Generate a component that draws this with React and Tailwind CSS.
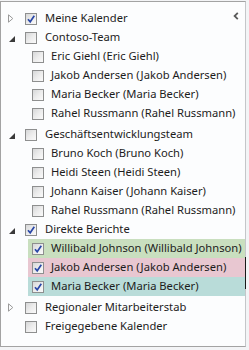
import React from 'react'

const groups = [
  { name: 'Meine Kalender', expander: 'closed', checked: true, items: [] },
  {
    name: 'Contoso-Team',
    expander: 'open',
    items: [
      { name: 'Eric Giehl (Eric Giehl)' },
      { name: 'Jakob Andersen (Jakob Andersen)' },
      { name: 'Maria Becker (Maria Becker)' },
      { name: 'Rahel Russmann (Rahel Russmann)' },
    ],
  },
  {
    name: 'Geschäftsentwicklungsteam',
    expander: 'open',
    gap: true,
    items: [
      { name: 'Bruno Koch (Bruno Koch)' },
      { name: 'Heidi Steen (Heidi Steen)' },
      { name: 'Johann Kaiser (Johann Kaiser)' },
      { name: 'Rahel Russmann (Rahel Russmann)' },
    ],
  },
  {
    name: 'Direkte Berichte',
    expander: 'open',
    checked: true,
    items: [
      { name: 'Willibald Johnson (Willibald Johnson)', checked: true, band: 'bg-[#c9dfbf]' },
      { name: 'Jakob Andersen (Jakob Andersen)', checked: true, band: 'bg-[#e8c7d1]' },
      { name: 'Maria Becker (Maria Becker)', checked: true, band: 'bg-[#b9dcd9]' },
    ],
  },
  { name: 'Regionaler Mitarbeiterstab', expander: 'closed', gap: true, items: [] },
  { name: 'Freigegebene Kalender', items: [] },
]

function Checkbox({ checked }) {
  return (
    <span className="w-[12px] h-[12px] shrink-0 border border-[#8e8f8f] bg-linear-to-br from-[#d6d7d8] via-[#ececec] to-[#fafafa] flex items-center justify-center">
      {checked && (
        <svg width="10" height="10" viewBox="0 0 10 10">
          <path d="M2 5.2 L4.2 7.8 L8.3 1.8" fill="none" stroke="#2a48a8" strokeWidth="1.7" />
        </svg>
      )}
    </span>
  )
}

function Expander({ type }) {
  if (type === 'closed') {
    return (
      <svg width="6" height="9" viewBox="0 0 6 9">
        <path d="M0.5 0.8 L4.8 4.5 L0.5 8.2 Z" fill="none" stroke="#9a9a9a" strokeWidth="1" />
      </svg>
    )
  }
  if (type === 'open') {
    return (
      <svg width="6" height="6" viewBox="0 0 6 6" className="mt-[3px] ml-[1px]">
        <path d="M6 0 L6 6 L0 6 Z" fill="#3a3a3a" />
      </svg>
    )
  }
  return null
}

export default function App() {
  return (
    <div className="w-[249px] h-[350px] bg-[#f3f4f6] overflow-hidden font-['Noto_Sans',sans-serif] text-[11.2px] text-[#1c1c1c]">
      <div className="relative mt-[1px] w-[246px] h-[346px] bg-[#fcfdfe] border border-[#a3a3a3] border-r-[#c4c6c9]">
        {/* collapse chevron */}
        <svg width="6" height="8" viewBox="0 0 6 8" className="absolute left-[232px] top-[10px]">
          <path d="M4.8 0.8 L1.6 4 L4.8 7.2" fill="none" stroke="#5a5a5a" strokeWidth="1.8" />
        </svg>
        <span className="absolute right-[-1px] top-[255px] w-[1px] h-[32px] bg-[#1a1a1a]" />

        <div className="pt-[7px] flex flex-col">
          {groups.map((g) => (
            <div key={g.name} className={g.gap ? 'mt-[2px]' : ''}>
              <div className="flex items-center h-[19px]">
                <span className="w-[24px] pl-[7px] flex items-center">
                  <Expander type={g.expander} />
                </span>
                <Checkbox checked={g.checked} />
                <span className="ml-[8px] whitespace-nowrap">{g.name}</span>
              </div>
              {g.items.map((it) => (
                <div
                  key={it.name}
                  className={`ml-[27px] h-[19px] flex items-center pl-[4px] ${it.band || ''}`}
                >
                  <Checkbox checked={it.checked} />
                  <span className="ml-[7px] whitespace-nowrap">{it.name}</span>
                </div>
              ))}
            </div>
          ))}
        </div>
      </div>
    </div>
  )
}
